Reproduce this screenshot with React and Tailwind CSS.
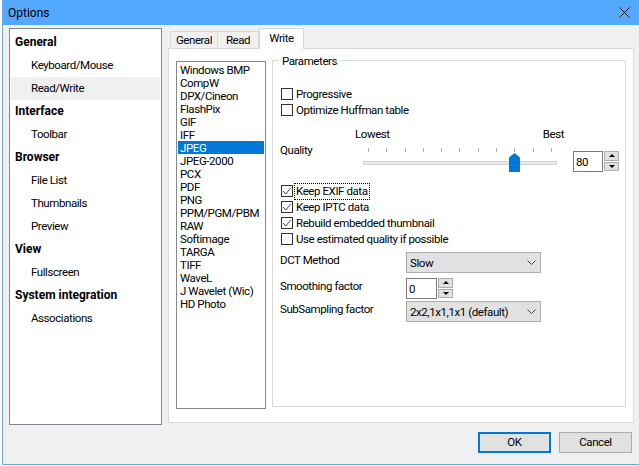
const sidebar = [
  { label: 'General', head: true },
  { label: 'Keyboard/Mouse' },
  { label: 'Read/Write', active: true },
  { label: 'Interface', head: true },
  { label: 'Toolbar' },
  { label: 'Browser', head: true },
  { label: 'File List' },
  { label: 'Thumbnails' },
  { label: 'Preview' },
  { label: 'View', head: true },
  { label: 'Fullscreen' },
  { label: 'System integration', head: true },
  { label: 'Associations' },
];

const formats = [
  'Windows BMP', 'CompW', 'DPX/Cineon', 'FlashPix', 'GIF', 'IFF', 'JPEG', 'JPEG-2000', 'PCX', 'PDF', 'PNG',
  'PPM/PGM/PBM', 'RAW', 'Softimage', 'TARGA', 'TIFF', 'WaveL', 'J Wavelet (Wic)', 'HD Photo',
];

const ticks = [0, 1, 2, 3, 4, 5, 6, 7, 8, 9, 10];

function Check({ label, checked, focused }) {
  return (
    <div className="h-4 flex items-center">
      <span className="w-[12px] h-[12px] border border-[#333] bg-white flex items-center justify-center shrink-0">
        {checked && (
          <svg width="10" height="10" viewBox="0 0 10 10" fill="none">
            <path d="M1 5 L3.8 8 L9 1.5" stroke="#444" strokeWidth="1" />
          </svg>
        )}
      </span>
      <span className={`ml-[2px] px-px leading-[15px] ${focused ? 'outline-1 outline-dotted outline-black' : ''}`}>{label}</span>
    </div>
  );
}

function Spinner() {
  return (
    <div className="flex flex-col gap-px w-[15px] h-5 ml-px">
      <div className="flex-1 bg-[#e1e1e1] border border-[#adadad] flex items-center justify-center">
        <span className="w-0 h-0 border-x-[3px] border-x-transparent border-b-[3px] border-b-black" />
      </div>
      <div className="flex-1 bg-[#e1e1e1] border border-[#adadad] flex items-center justify-center">
        <span className="w-0 h-0 border-x-[3px] border-x-transparent border-t-[3px] border-t-black" />
      </div>
    </div>
  );
}

function Select({ value }) {
  return (
    <div className="w-[135px] h-[21px] bg-[#e1e1e1] border border-[#adadad] flex items-center justify-between pl-[3px] pr-[4px]">
      <span className="whitespace-nowrap pt-[1px]">{value}</span>
      <svg width="9" height="6" viewBox="0 0 9 6" fill="none">
        <path d="M0.5 0.5 L4.5 4.5 L8.5 0.5" stroke="#444" strokeWidth="1" />
      </svg>
    </div>
  );
}

export default function App() {
  return (
    <div className="w-[639px] h-[466px] bg-white pl-[2px] overflow-hidden text-[11.5px] tracking-[-0.42px] leading-[13px] text-black font-['Roboto','Noto_Sans',sans-serif]">
      <div className="h-[465px] flex flex-col bg-[#f0f0f0] border-l border-b border-[#6fa8dc]">
        <div className="h-[25px] shrink-0 bg-[#53a9ff] flex items-center justify-between pl-[5px] pr-[9px]">
          <span className="text-[12px] tracking-normal pt-[2px]">Options</span>
          <svg width="11" height="11" viewBox="0 0 11 11" fill="none">
            <path d="M0.5 0.5 L10.5 10.5 M10.5 0.5 L0.5 10.5" stroke="#111" strokeWidth="1" />
          </svg>
        </div>

        <div className="flex-1 flex pl-[6px] pr-[5px] pt-[3px] gap-[6px] min-h-0">
          <div className="w-[153px] h-[397px] shrink-0 bg-white border border-[#828790] p-px pt-[2px]">
            {sidebar.map(item => (
              <div
                key={item.label}
                className={`h-[23px] flex items-center ${item.head ? 'pl-[4px] font-bold text-[12px] tracking-normal' : 'pl-[20px]'} ${item.active ? 'bg-[#f0f0f0]' : ''}`}
              >
                {item.label}
              </div>
            ))}
          </div>

          <div className="flex-1 flex flex-col">
            <div className="h-5 flex items-end pl-[2px] relative z-10">
              <div className="h-[17px] w-[48px] bg-[#f0f0f0] border border-b-0 border-[#d9d9d9] flex items-center justify-center">General</div>
              <div className="h-[17px] w-[41px] bg-[#f0f0f0] border border-l-0 border-b-0 border-[#d9d9d9] flex items-center justify-center">Read</div>
              <div className="h-[21px] w-[45px] -mb-px pb-[2px] bg-white border border-b-0 border-[#d9d9d9] flex items-center justify-center">Write</div>
            </div>
            <div className="h-[376px] bg-white border border-[#d9d9d9] flex gap-[6px] pl-[7px] pt-[12px]">
              <div className="w-[90px] h-[348px] shrink-0 bg-white border border-[#828790] pt-[1px] pl-px pr-px">
                {formats.map(name => (
                  <div key={name} className={`h-[13px] pt-[2px] pl-[2px] flex items-center ${name === 'JPEG' ? 'bg-[#0078d7] text-white' : ''}`}>{name}</div>
                ))}
              </div>

              <div className="w-[354px] h-[347px] -mt-px relative border border-[#d9d9d9] pl-[8px] pr-[6px]">
                <span className="absolute -top-[6px] left-[5px] bg-white px-[4px] h-[13px] flex items-center">Parameters</span>

                <div className="pt-[25px]">
                  <Check label="Progressive" />
                  <Check label="Optimize Huffman table" />
                </div>

                <div className="mt-[10px] h-[46px] flex">
                  <div className="w-[83px] shrink-0 -ml-[1px] pt-[16px]">Quality</div>
                  <div className="w-[210px] shrink-0">
                    <div className="h-[14px] flex items-start justify-between pr-[9px] -ml-[8px]">
                      <span>Lowest</span>
                      <span>Best</span>
                    </div>
                    <div className="relative h-[32px]">
                      <div className="flex justify-between pl-[5px] pr-[21px] pt-[6px]">
                        {ticks.map(t => <span key={t} className="w-px h-[4px] bg-[#b0b0b0]" />)}
                      </div>
                      <div className="absolute left-0 top-[19px] w-[194px] h-[4px] bg-[#e7eaea] border border-[#d6d6d6]" />
                      <svg className="absolute left-[146px] top-[11px]" width="11" height="19" viewBox="0 0 11 19">
                        <path d="M0 4.5 L5.5 0 L11 4.5 V19 H0 Z" fill="#0078d7" />
                      </svg>
                    </div>
                  </div>
                  <div className="flex h-5 mt-[23px]">
                    <div className="w-[30px] h-[21px] pt-px border border-[#7a7a7a] bg-white flex items-center pl-[2px]">80</div>
                    <Spinner />
                  </div>
                </div>

                <div className="mt-[9px]">
                  <Check label="Keep EXIF data" checked focused />
                  <Check label="Keep IPTC data" checked />
                  <Check label="Rebuild embedded thumbnail" checked />
                  <Check label="Use estimated quality if possible" />
                </div>

                <div className="mt-[5px] flex flex-col gap-[5px] -ml-[1px]">
                  <div className="flex">
                    <div className="w-[126px] pt-[2px]">DCT Method</div>
                    <Select value="Slow" />
                  </div>
                  <div className="flex">
                    <div className="w-[126px] pt-[2px]">Smoothing factor</div>
                    <div className="w-[31px] h-[21px] pt-px border border-[#7a7a7a] bg-white flex items-center pl-[2px]">0</div>
                    <Spinner />
                  </div>
                  <div className="flex -mt-[3px]">
                    <div className="w-[126px] pt-[2px]">SubSampling factor</div>
                    <Select value="2x2,1x1,1x1 (default)" />
                  </div>
                </div>
              </div>
            </div>
          </div>
        </div>

        <div className="h-[41px] shrink-0 flex justify-end items-start gap-2 pr-[7px] pt-[9px]">
          <button className="w-[73px] h-[21px] bg-[#e1e1e1] border-2 border-[#0078d7] flex items-center justify-center">OK</button>
          <button className="w-[73px] h-[21px] bg-[#e1e1e1] border border-[#adadad] flex items-center justify-center">Cancel</button>
        </div>
      </div>
    </div>
  );
}
